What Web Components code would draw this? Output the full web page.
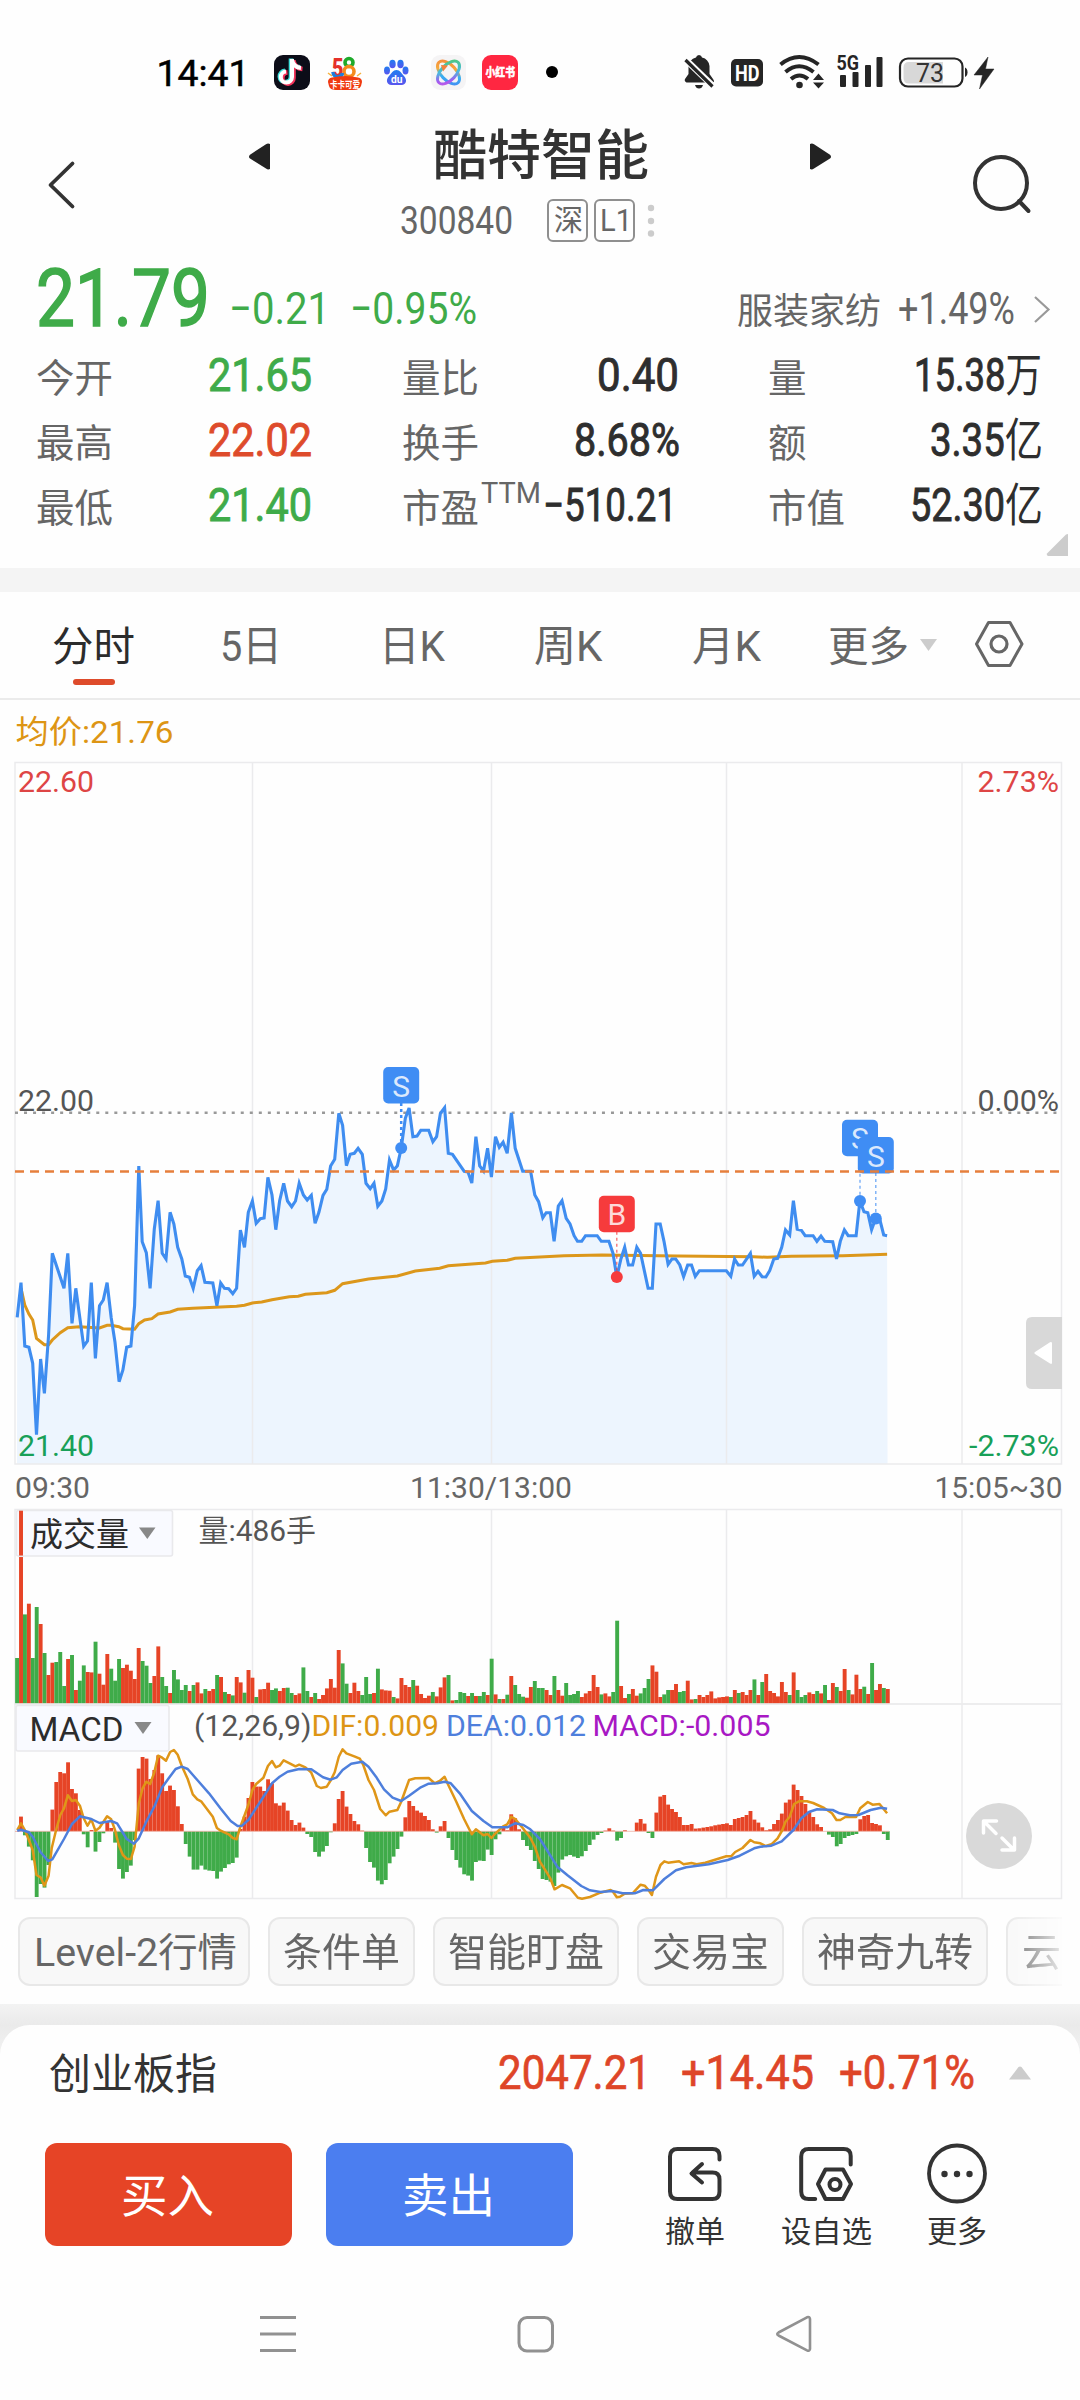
<!DOCTYPE html>
<html lang="zh-CN">
<head>
<meta charset="utf-8">
<title>酷特智能 300840</title>
<style>
html,body{margin:0;padding:0;background:#fefefe}
body{width:1080px;height:2400px;overflow:hidden;font-family:Roboto,"Noto Sans CJK SC",sans-serif;color:#333}
</style>
</head>
<body>
<stock-app></stock-app>
<script>
const FONT = 'Roboto,"Noto Sans CJK SC",sans-serif';

/* Text scaled horizontally to an exact width on a given baseline. */
class FitText extends HTMLElement {
  connectedCallback() {
    const a = n => this.getAttribute(n);
    const w = a('w'), h = a('h'), b = a('b'), s = a('s');
    const sk = a('sk') ? `stroke:currentColor;stroke-width:${a('sk')}px;` : '';
    const text = a('text').replace(/[万亿]/g, m => `<tspan style="stroke:none">${m}</tspan>`);
    this.attachShadow({mode: 'open'}).innerHTML = `
      <style>:host{display:block;flex:none;width:${w}px;height:${h}px}svg{display:block;overflow:visible}
      text{font-family:${FONT};font-size:${s}px;font-weight:${a('wt') || 400};fill:currentColor;${sk}}</style>
      <svg width="${w}" height="${h}"><text x="0" y="${b}">${text}</text></svg>`;
    const t = this.shadowRoot.querySelector('text');
    const n = t.getComputedTextLength();
    if (n > 0) t.setAttribute('transform', `scale(${(w / n).toFixed(4)} 1)`);
  }
}

const T = (x, text, w, s, h, b, extra = '') => `<fit-text style="margin-left:${x}px" text="${text}" w="${w}" s="${s}" h="${h}" b="${b}" ${extra}></fit-text>`;

/* A row of fit-texts given by absolute start and end; margins are worked out in flow order. */
function flowRow(h, items) {
  let cur = 0;
  return items.map(i => {
    const m = i.x - cur; cur = i.x + i.w;
    if (i.html) return `<div style="flex:none;margin-left:${m}px;width:${i.w}px;height:${h}px">${i.html}</div>`;
    return T(m, i.t, i.w, i.s, h, i.b, (i.wt ? `wt="${i.wt}" ` : '') + (i.sk ? `sk="${i.sk}" ` : '') + (i.c ? `class="${i.c}"` : ''));
  }).join('');
}
const svg = (w, h, vb, body) => `<svg width="${w}" height="${h}" viewBox="${vb}" style="display:block;overflow:visible">${body}</svg>`;

class StatusBar extends HTMLElement {
  connectedCallback() {
    const txt = (x, y, s, f, w, t, extra = '') => `<text x="${x}" y="${y}" font-size="${s}" fill="${f}" textLength="${w}" lengthAdjust="spacingAndGlyphs" ${extra}>${t}</text>`;
    this.attachShadow({mode: 'open'}).innerHTML = `
    <style>:host{display:flex;height:110px}svg{display:block;font-family:${FONT};flex:none}</style>
    ${svg(600, 110, '0 0 600 110', `
      <defs>
        <linearGradient id="bd" x1="0" y1="0" x2="0" y2="1"><stop offset="0" stop-color="#1f7df0"/><stop offset="1" stop-color="#5a55ee"/></linearGradient>
        <linearGradient id="rb" x1="0" y1="0" x2="1" y2="1"><stop offset="0" stop-color="#f7923a"/><stop offset=".35" stop-color="#58c97a"/><stop offset=".65" stop-color="#3f8df6"/><stop offset="1" stop-color="#b758e8"/></linearGradient>
        <linearGradient id="rc" gradientUnits="userSpaceOnUse" x1="438" y1="60" x2="460" y2="85"><stop offset="0" stop-color="#f5813c"/><stop offset=".4" stop-color="#f4a93c"/><stop offset=".6" stop-color="#38b0f0"/><stop offset="1" stop-color="#4a7df5"/></linearGradient>
        <linearGradient id="rd" gradientUnits="userSpaceOnUse" x1="460" y1="60" x2="438" y2="85"><stop offset="0" stop-color="#4fce5a"/><stop offset=".5" stop-color="#49b9e0"/><stop offset=".75" stop-color="#a05cf0"/><stop offset="1" stop-color="#d95ae0"/></linearGradient>
      </defs>
      ${txt(156.500, 86, 37.5, '#000', 93, '14:41', 'stroke="#000" stroke-width=".5"')}
      <rect x="274" y="55" width="36" height="35" rx="9" fill="#0c0d18"/>
      <g fill="none" stroke-width="4.6"><path d="M292 59v18a5.6 5.6 0 1 1-6-5.6M292 60c1 5 4 7.500 9 8" stroke="#3fe0dc" transform="translate(-1 -.6)"/><path d="M292 59v18a5.600 5.600 0 1 1-6-5.600M292 60c1 5 4 7.500 9 8" stroke="#f3335b" transform="translate(1.500 1)"/><path d="M292 59v18a5.600 5.600 0 1 1-6-5.600M292 60c1 5 4 7.500 9 8" stroke="#fff" stroke-width="4"/></g>
      ${txt(332, 77, 26, '#e5302a', 11.500, '5', 'font-weight="900"')}
      <g fill="none" stroke-width="3.600"><circle cx="349" cy="62.500" r="4" stroke="#1eaa2b"/><circle cx="349" cy="71.500" r="5" stroke="#f58a1c"/></g><path d="M333 72c0 6 9 6 9.500 1" fill="none" stroke="#1f7ddb" stroke-width="3.500"/>
      <path d="M328 73l4 3M361 73l-4 3" stroke="#f6b13c" stroke-width="1.500"/>
      <path d="M328 82q0-4 4-4.500q13-3 26 0q4 .5 4 4.500l-1 4q-2 4-7 4h-18q-6 0-7-4z" fill="#f03a10"/>
      ${txt(330, 88, 9.500, '#fff', 30, '卡卡可爱', 'font-weight="700"')}
      <g fill="url(#bd)"><ellipse cx="387" cy="70.500" rx="3" ry="4"/><ellipse cx="392.500" cy="64" rx="3.200" ry="4.300"/><ellipse cx="400.500" cy="64" rx="3.200" ry="4.300"/><ellipse cx="405.500" cy="70.500" rx="3" ry="4"/><path d="M396.500 70c3.500 0 5 3.500 7.500 6c3.500 3.500 2.500 9-2.500 9h-10c-5 0-6-5.500-2.500-9c2.500-2.500 4-6 7.500-6z"/></g>
      ${txt(391, 83, 11, '#fff', 11.500, 'du', 'font-weight="700"')}
      <rect x="431" y="55" width="35" height="35" rx="9" fill="#f5f4f5"/>
      <g fill="none" stroke-width="3"><ellipse cx="448.500" cy="72.500" rx="14" ry="7.500" transform="rotate(47 448.500 72.500)" stroke="url(#rc)"/><ellipse cx="448.500" cy="72.500" rx="14" ry="7.500" transform="rotate(-47 448.500 72.500)" stroke="url(#rd)"/></g>
      <path d="M441 65l7 .500l-5 6z" fill="#f5803c"/>
      <rect x="482" y="55" width="36" height="35" rx="9" fill="#ff2741"/>
      ${txt(485.500, 77, 12, '#fff', 29.500, '小红书', 'font-weight="900" stroke="#fff" stroke-width=".4"')}
      <circle cx="552" cy="72" r="6" fill="#000"/>`)}
    ${svg(480, 110, '600 0 480 110', `
      <g fill="#252525">
        <path d="M686.500 82.500h26.500q2-1 0-3.500l-3.500-5v-8q-1-7-7.500-8.500q-.5-2.500-3-2.500t-3 2.500q-7 2-7.500 8.500v8l-3.500 5q-1 2 1.500 3.500z"/><path d="M695 85h8q-1 3.500-4 3.500t-4-3.500z"/>
        <path d="M685 59l29 28" stroke="#fefefe" stroke-width="6.500"/><path d="M685.500 60l27 26.500" stroke="#252525" stroke-width="3.200"/>
        <rect x="731" y="59" width="32" height="27.500" rx="5"/>
        ${txt(735, 80.500, 22, '#fff', 24.500, 'HD', 'font-weight="700"')}
        <g fill="none" stroke="#252525" stroke-width="4"><path d="M780.500 64.500q18.500-15 38 0"/><path d="M785.500 72q13.500-11.500 28 0"/><path d="M791 79q8.500-7 17 0"/></g>
        <circle cx="799.500" cy="85" r="3.300"/><path d="M818.500 73.500l5.500 6.500h-11zM818.500 88.500l5.500-6h-11z"/>
        ${txt(836.500, 70, 19.500, '#252525', 22.500, '5G', 'font-weight="700"')}
        <rect x="840" y="75" width="6" height="12" rx="1"/><rect x="852.500" y="72" width="6" height="15" rx="1"/><rect x="865" y="65" width="6" height="22" rx="1"/><rect x="876.500" y="57" width="6" height="30" rx="1"/>
        <path d="M965 67.500q2.500 1 2.500 4.800t-2.500 4.700z"/>
        <path d="M988 57L974 75h8.500l-3 14L994 69h-8.500z" stroke="#252525" stroke-width=".5"/>
      </g>
      <rect x="900" y="58.500" width="62.500" height="28" rx="8" fill="none" stroke="#252525" stroke-width="2.200"/>
      <path d="M909 62h34v21.500h-34q-5.500 0-5.500-5.500v-10.500q0-5.500 5.500-5.500z" fill="#d8d8d8"/>
      ${txt(916, 81.500, 25, '#333', 28, '73')}`)}`;
  }
}
class StockHeader extends HTMLElement {
  connectedCallback() {
    this.attachShadow({mode: 'open'}).innerHTML = `
    <style>:host{display:flex;height:146px;align-items:flex-start}
    .mid{width:290px;margin-left:110px}.r{display:flex}.code{margin-top:13px;height:44px;color:#666}
    .badge{box-sizing:border-box;border:2px solid #8f8f8f;border-radius:6px;width:41px;height:43px}</style>
    ${svg(92, 146, '0 110 92 146', '<path d="M72.500 163.500L50.500 185L72.500 206.500" fill="none" stroke="#333" stroke-width="3.800" stroke-linecap="round" stroke-linejoin="round"/>')}
    ${svg(190, 146, '92 110 190 146', '<path d="M270 144v25q-2 1-4-.5l-16-10q-2-1.800 0-3.800l16-10.500q2-1.500 4-.2z" fill="#222"/>')}
    <div class="mid">
      <div class="r">${flowRow(76, [{x: 41, w: 216, s: 54, b: 65, t: '酷特智能', wt: 500}])}</div>
      <div class="r code">${T(8, '300840', 113, 38.500, 44, 35)}
        <div class="badge" style="margin-left:34px">${T(4.500, '深', 29, 29, 39, 30)}</div>
        <div class="badge" style="margin-left:6px">${T(3.500, 'L1', 32, 31, 39, 30)}</div>
        ${svg(20, 44, '635 199 20 44', '<g fill="#ccc"><circle cx="651" cy="208" r="3.200"/><circle cx="651" cy="221" r="3.200"/><circle cx="651" cy="233.500" r="3.200"/></g>')}
      </div></div>
    ${svg(398, 146, '682 110 398 146', '<path d="M810 144v25q2 1 4-.5l16-10q2-1.800 0-3.800l-16-10.500q-2-1.500-4-.2z" fill="#222"/><circle cx="1001" cy="183" r="26" fill="none" stroke="#333" stroke-width="4"/><path d="M1019 201l9.500 10" stroke="#333" stroke-width="4" stroke-linecap="round"/>')}`;
  }
}

class QuotePanel extends HTMLElement {
  connectedCallback() {
    const L = (x, w, t) => ({x, w, t, s: 38.500, b: 46, c: 'l'});
    const V = (x, w, t, c = '') => ({x, w, t, s: 46, b: 45.500, c, sk: .9});
    this.attachShadow({mode: 'open'}).innerHTML = `
    <style>:host{display:flex;flex-direction:column;height:312px;color:#2e2e2e}
    .r{display:flex;flex:none;height:65px}.top{height:90px}.g{color:#3fab49}.d{color:#de4b2b}.l{color:#666}
    .corner{align-self:flex-end;margin:-7px 11px 0 0}</style>
    <div class="r top">${flowRow(90, [
      {x: 36, w: 174, t: '21.79', s: 80.500, b: 70, c: 'g', sk: 1.600},
      {x: 229, w: 101, t: '−0.21', s: 45, b: 68, c: 'g'}, {x: 350, w: 127, t: '−0.95%', s: 45, b: 68, c: 'g'},
      {x: 737, w: 144, t: '服装家纺', s: 36, b: 68, c: 'l'}, {x: 898, w: 117, t: '+1.49%', s: 43.500, b: 68, c: 'l'},
      {x: 1032, w: 20, html: svg(20, 90, '1032 256 20 90', '<path d="M1035 297l13.500 12.500L1035 322" fill="none" stroke="#999" stroke-width="2.200"/>')}])}</div>
    <div class="r">${flowRow(65, [L(36, 77, '今开'), V(208, 104, '21.65', 'g'), L(402, 77, '量比'), V(597, 82, '0.40'), L(768, 38.500, '量'), V(914, 128, '15.38万')])}</div>
    <div class="r">${flowRow(65, [L(36, 77, '最高'), V(208, 104, '22.02', 'd'), L(402, 77, '换手'), V(574, 106, '8.68%'), L(768, 38.500, '额'), V(930, 113, '3.35亿')])}</div>
    <div class="r">${flowRow(65, [L(36, 77, '最低'), V(208, 104, '21.40', 'g'), L(402, 77, '市盈'), {x: 480.500, w: 60, t: 'TTM', s: 29.500, b: 27, c: 'l'}, V(543, 134, '−510.21'), L(768, 77, '市值'), V(910, 133, '52.30亿')])}</div>
    <div class="corner">${svg(23, 22, '0 0 23 22', '<path d="M22 0v22H2q-2-1-1-2.500L20 .5z" fill="#ccc"/>')}</div>`;
  }
}

class ChartTabs extends HTMLElement {
  connectedCallback() {
    const t = (x, w, t, c = '') => ({x, w, t, c, s: 40.500, b: 69});
    this.attachShadow({mode: 'open'}).innerHTML = `
    <style>:host{display:flex;flex-direction:column;box-sizing:border-box;height:132px;border-top:24px solid #f4f4f4;border-bottom:2px solid #ebebeb;color:#666}
    .r{display:flex}.on{color:#2c2c2c}.bar{width:42px;height:6px;border-radius:3px;background:#de4b2b;margin:-1px 0 0 73px}</style>
    <div class="r">${flowRow(88, [t(52, 83, '分时', 'on'), {...t(220, 62, '5日'), s: 42}, {...t(379, 66, '日K'), s: 42}, {...t(534, 68.500, '周K'), s: 42}, {...t(692, 69, '月K'), s: 42}, t(828, 81, '更多'),
      {x: 920, w: 18, html: svg(18, 88, '920 592 18 88', '<path d="M920 639h17l-8.500 12z" fill="#ccc"/>')},
      {x: 974, w: 50, html: svg(50, 88, '974 592 50 88', '<path d="M988.500 622.500h21.500l12 21.500l-12 21.500h-21.500l-12-21.500z" fill="none" stroke="#666" stroke-width="3" stroke-linejoin="round"/><circle cx="999" cy="644" r="8" fill="none" stroke="#666" stroke-width="3.200"/>')}])}</div>
    <div class="bar"></div>`;
  }
}

/* Series points are kept in the chart's half-panel units: 2.904 per px across, 3 per px down. */
const KX = 2.904;
const pts = (s, dx, dy) => s.trim().split(/\s+/).map(p => { const [x, y] = p.split(',').map(Number); return (dx + x / KX).toFixed(1) + ',' + (dy + y / 3).toFixed(1); }).join(' ');

const PRICE_A = `50,832 61,728 72,918 84,922 95,970 106,1184 118,957 129,1060 141,885 152,640 186,745 197,640 209,850 220,745 243,919 254,903 265,728 277,955 289,797 300,780 311,728 323,833 334,907 346,1025 357,990 368,922 380,918 391,797 403,378 413,605 425,638 436,745 448,567 459,482 471,640 482,657 494,517 505,552 516,622 528,657 538,708 550,712 561,745 573,692 584,677 595,727 618,729 630,797 641,729 652,745 664,746 676,761 687,745 698,570 710,622 721,517 733,483 744,550 756,536 767,534 778,412 790,465 801,569 812,483 824,430 835,483 847,500 858,483 869,430 881,465 892,480 904,466 915,550 926,517 938,466 949,448 960,378 972,358 984,220 995,256 1006,377 1017,343 1029,340 1040,325 1052,343 1063,430 1075,446 1086,430 1097,499 1109,483 1120,447 1131,360 1143,390 1154,377 1165,325 1177,235 1188,204 1199,290 1211,288 1222,271 1245,271 1257,305 1268,290 1279,220 1291,203 1302,340 1314,343 1348,394 1359,396 1370,429 1382,290 1393,378 1404,393 1416,325 1427,411 1439,290 1450,322 1461,307 1473,340 1485,219 1496,325 1518,394 1541,394 1553,465 1564,485`;
const PRICE_B = `8,533 18,518 30,518 41,604 53,498 64,482 76,535 87,552 99,587 109,604 121,604 132,587 166,587 178,604 200,604 212,640 223,711 235,657 246,622 257,675 269,675 281,622 292,640 314,745 326,745 337,552 349,552 360,604 372,673 383,657 394,657 406,675 417,710 429,675 440,675 451,709 463,692 541,692 554,709 565,657 576,675 588,675 611,640 622,709 633,694 645,710 656,711 667,692 679,657 690,655 702,622 713,570 725,585 736,482 747,568 759,571 770,587 793,587 804,604 816,588 827,604 850,605 861,657 872,604 884,570 895,587 918,587 929,482 941,515 952,518 963,569 975,535 986,535 998,585 1008,587`;
const AVG_A = `61,745 72,795 84,822 95,840 106,895 129,914 141,914 152,900 175,878 197,863 230,860 289,864 311,856 323,856 345,860 357,866 391,868 403,851 420,840 441,836 459,822 494,816 516,808 560,805 640,801 687,799 710,796 733,789 760,786 790,779 840,770 866,769 887,763 949,758 972,751 995,731 1070,717 1154,708 1206,693 1277,685 1302,677 1410,669 1430,664 1473,661 1496,655 1568,651`;
const AVG_B = `70,647 180,645 400,648 620,650 660,652 730,649 880,647 1008,643`;
const DIF_A = `50,1110 61,1090 72,1110 84,1140 95,1170 106,1245 118,1252 129,1277 141,1247 150,1165 163,1110 175,1065 186,1045 197,1006 209,1023 220,1020 232,1037 243,1075 254,1097 265,1078 277,1112 289,1103 311,1069 323,1078 334,1110 345,1155 357,1185 368,1196 380,1197 391,1160 403,1030 414,985 425,965 436,972 448,937 459,887 471,893 482,902 494,876 505,870 516,884 528,918 545,957 560,1003 573,1018 584,1024 618,1070 630,1104 641,1112 664,1123 676,1134 687,1138 698,1100 721,1035 733,990 744,972 765,953 778,918 790,903 801,922 812,917 824,901 858,919 869,914 887,922 904,938 920,978 932,984 949,980 961,960 972,937 984,890 995,868 1006,880 1029,889 1045,896 1055,915 1070,960 1086,990 1104,1047 1120,1066 1131,1055 1154,1050 1165,1025 1188,960 1206,955 1245,954 1262,970 1277,963 1291,950 1302,975 1325,1025 1348,1078 1370,1123 1382,1108 1404,1126 1416,1122 1427,1134 1439,1120 1461,1099 1473,1093 1485,1070 1496,1077 1518,1104 1540,1133 1553,1160 1568,1205`;
const DIF_B = `18,1115 30,1135 42,1168 64,1155 87,1165 110,1193 122,1196 145,1191 175,1178 205,1170 212,1175 223,1192 232,1190 246,1181 269,1180 292,1154 304,1157 315,1170 325,1185 337,1130 350,1095 361,1084 372,1088 404,1084 417,1093 440,1089 455,1093 480,1088 541,1069 555,1069 567,1056 588,1044 611,1020 622,1027 640,1030 656,1038 672,1033 690,1015 704,990 713,965 725,950 738,912 752,904 775,904 793,909 825,924 848,940 861,960 872,960 887,951 918,951 930,925 952,906 966,914 986,912 1008,940`;
const DEA_A = `50,1112 61,1109 84,1117 95,1130 118,1177 140,1203 152,1198 186,1137 209,1092 232,1069 265,1077 289,1089 323,1083 340,1090 368,1137 389,1151 403,1135 425,1085 448,1040 471,982 490,955 510,927 528,920 545,927 573,960 607,1000 640,1045 670,1083 690,1098 703,1097 721,1080 756,1025 790,970 812,950 835,935 869,927 904,928 938,952 960,959 978,952 995,930 1020,911 1052,905 1070,920 1092,950 1115,988 1140,1013 1165,1023 1188,1007 1222,982 1245,971 1270,970 1291,965 1309,970 1335,1000 1370,1053 1404,1083 1430,1102 1473,1102 1496,1090 1520,1095 1540,1108 1568,1137`;
const DEA_B = `20,1050 50,1100 80,1126 120,1158 145,1171 175,1176 210,1173 240,1180 275,1180 300,1170 328,1171 361,1137 395,1111 425,1102 490,1093 545,1080 580,1067 622,1045 640,1040 672,1037 702,1024 736,990 759,955 781,936 805,928 850,930 870,940 900,946 925,945 960,930 990,923 1008,926`;
const VOL_A = 'g594 r152 g463 r431 g594 g441 r492 g579 r645 r608 g606 g576 g678 r597 g585 r690 g662 g616 r636 r637 g545 r641 r674 r582 g626 g662 g597 r624 r614 r632 r657 r564 g603 g617 g669 r648 r559 g651 g678 r699 g630 g658 g690 g675 r693 g675 r667 r700 g687 r693 r687 g645 r651 g696 r702 g706 r651 r667 g698 r630 r653 g711 r688 r687 r668 g690 g685 r693 r684 g683 g699 r705 r700 g622 g693 r711 g699 r717 r705 r685 r657 r683 r570 g610 g671 r699 r668 r693 g705 g651 g702 r699 g626 r688 r691 r692 g711 r715 r654 r675 r681 g660 r677 r702 r714 r707 g696 r709 r682 r652 g645 r721 g720 g696 g699 r708 g699 r708 g708 g696 r705 g596 r703 g717 r717 g704 r648 g675 g702 g710 r713 r681 g663 g684'.split(' ');
const VOL_B = 'g564 r570 r585 g528 r570 r587 g549 g585 g582 g573 r591 r580 r573 r525 r561 g583 r580 r589 g576 g362 r558 r594 g582 r567 r587 g580 g564 g537 r496 r515 r591 g583 g570 r570 r552 g576 g573 r542 r598 g597 r585 r591 r585 r574 r595 r592 r591 r589 g591 r570 g579 r576 r585 r570 g538 r585 g546 r522 r573 r579 r589 r546 r576 g585 r517 g570 g591 g585 r577 r582 g573 r580 g555 r600 r549 g561 r573 r507 g570 r583 r524 r567 g560 r582 g489 r570 r552 g564 r567'.split(' ');
const MACD_A = '1113 1070 1126 1160 1201 1311 1272 1283 1215 1049 966 936 940 907 987 1000 1050 1123 1162 1110 1175 1146 1120 1085 1104 1148 1227 1256 1236 1217 1140 926 891 896 957 930 886 940 993 977 990 1039 1092 1152 1190 1229 1229 1217 1229 1232 1233 1256 1235 1224 1213 1209 1193 1107 1070 1014 966 980 980 993 958 970 1030 1037 1028 1052 1080 1095 1088 1103 1122 1131 1176 1190 1175 1158 1117 1090 1017 993 1040 1062 1083 1093 1112 1164 1206 1223 1262 1273 1260 1210 1190 1167 1130 1072 1023 1038 1052 1058 1068 1080 1108 1118 1099 1083 1134 1170 1200 1223 1243 1247 1262 1206 1202 1203 1169 1185 1138 1123 1101 1111 1063 1075 1108 1140 1158 1170 1203 1227'.split(' ').map(Number);
const MACD_B = '1137 1140 1145 1158 1118 1079 1069 1065 1070 1074 1069 1053 1035 1019 1005 999 992 985 992 1022 1014 991 994 994 968 957 971 999 1014 938 890 885 914 927 936 951 975 975 972 986 985 983 981 979 976 974 972 970 975 957 954 951 945 933 959 968 982 991 988 972 960 941 908 899 854 870 888 912 935 951 973 981 994 1004 1011 1039 1032 1014 1008 1005 1002 958 948 945 969 972 976 1002 1020'.split(' ').map(Number);

const RED = '#e64426', GREEN = '#3fab49', GRID = '#ebebed';
const barX = i => 17.1 + 3.922 * i - 1.96;
const grid = (y0, y1) => `<g fill="none" stroke="${GRID}" stroke-width="1.500"><rect x="15" y="${y0}" width="1046.500" height="${y1 - y0}"/>${[252.5, 491.5, 726.5, 962].map(x => `<path d="M${x} ${y0}V${y1}"/>`).join('')}</g>`;
const label = (x, y, w, s, f, t) => `<text x="${x}" y="${y}" textLength="${w}" lengthAdjust="spacingAndGlyphs" font-size="${s}" fill="${f}">${t}</text>`;
const chartCss = `<style>:host{display:block}svg{font-family:${FONT}}</style>`;

class PriceChart extends HTMLElement {
  connectedCallback() {
    const line = pts(PRICE_A, 0, 1040) + ' ' + pts(PRICE_B, 540, 1040);
    const pin = (x, y, cx, cy, c, t, dash) => `<path d="M${cx} ${y + 36}V${cy}" stroke="${c}" stroke-width="${dash ? 2.5 : 1.3}" stroke-dasharray="3 3" opacity="${dash ? 1 : .75}"/><circle cx="${cx}" cy="${cy}" r="6" fill="${c}"/><rect x="${x}" y="${y}" width="36" height="36.500" rx="5" fill="${c}"/><text x="${x + 18}" y="${y + 29.5}" text-anchor="middle" font-size="30" fill="#fff" fill-opacity=".82">${t}</text>`;
    this.attachShadow({mode: 'open'}).innerHTML = chartCss + svg(1080, 809, '0 700 1080 809', `
      ${label(15.500, 742.500, 158, 32, '#dd9514', '均价:21.76')}
      <polygon points="17,1464 ${line} 887.500,1464" fill="#edf5fe"/>
      ${grid(762.500, 1464)}
      <path d="M15 1112.700H1062" stroke="#999" stroke-width="2.600" stroke-dasharray="3 6.030"/>
      <polyline points="${pts(AVG_A, 0, 1040)} ${pts(AVG_B, 540, 1040)}" fill="none" stroke="#dc971b" stroke-width="3"/>
      <polyline points="${line}" fill="none" stroke="#3f8df0" stroke-width="3.100"/>
      ${pin(383.200, 1067, 401.200, 1148, '#3f8df4', 'S', true)}
      ${pin(598.800, 1195.800, 616.800, 1277, '#f63b3c', 'B')}
      ${pin(842, 1119.700, 860, 1201, '#3f8df4', 'S')}
      ${pin(857.800, 1137, 875.800, 1218.500, '#3f8df4', 'S')}
      <path d="M15 1171.500H1060" stroke="#e67f3c" stroke-width="2.600" stroke-dasharray="9 6"/>
      ${label(18, 791.500, 76, 30, '#de4545', '22.60')}${label(977.500, 791.500, 81.500, 30, '#de4545', '2.73%')}
      ${label(18, 1111, 76, 30, '#555', '22.00')}${label(977.500, 1111, 81.500, 30, '#555', '0.00%')}
      ${label(18, 1455.500, 76, 30, '#18a058', '21.40')}${label(969, 1455.500, 90, 30, '#18a058', '-2.73%')}
      ${label(15, 1497.500, 75, 30, '#666', '09:30')}${label(410, 1498, 162, 30, '#666', '11:30/13:00')}${label(934.500, 1498, 128, 30, '#666', '15:05~30')}
      <path d="M1062 1317h-30q-6 0-6 6v60q0 6 6 6h30z" fill="#d8d8d8"/><path d="M1052 1342.500v21q-1 .7-2 0l-15-9.500q-1.500-1 0-2l15-9.800q1-.5 2 .3z" fill="#fff"/>`);
  }
}

class VolumeChart extends HTMLElement {
  connectedCallback() {
    const bar = (v, i, base) => { const h = (base - v.slice(1)) / 3; return `<rect x="${barX(i).toFixed(2)}" y="${(1703.7 - h).toFixed(1)}" width="3.920" height="${h.toFixed(1)}" fill="${v[0] === 'r' ? RED : GREEN}"/>`; };
    this.attachShadow({mode: 'open'}).innerHTML = chartCss + svg(1080, 195, '0 1509 1080 195', `
      ${grid(1509.500, 1704)}
      <rect x="16.500" y="1510.500" width="156" height="45.500" rx="2" fill="#f9faff" stroke="#e9e9ec" stroke-width="1.600"/>
      ${VOL_A.map((v, i) => bar(v, i, 731)).join('')}${VOL_B.map((v, i) => bar(v, i + 134, 611)).join('')}
      <path d="M18 1556.300H24" stroke="#e9e9ec" stroke-width="1.500"/>
      ${label(30, 1545.500, 99, 33, '#2c2c2c', '成交量')}<path d="M139 1527.500h16.500l-8.200 11.500z" fill="#888"/>
      ${label(198.500, 1541, 117.500, 29.500, '#555', '量:486手')}`);
  }
}

class MacdChart extends HTMLElement {
  connectedCallback() {
    const bar = (v, i, zero) => { const d = (zero - v) / 3; return `<rect x="${barX(i).toFixed(2)}" y="${(d > 0 ? 1831.3 - d : 1831.3).toFixed(1)}" width="3.850" height="${Math.abs(d).toFixed(1)}" fill="${d > 0 ? RED : GREEN}"/>`; };
    this.attachShadow({mode: 'open'}).innerHTML = chartCss + svg(1080, 195, '0 1704 1080 195', `
      ${grid(1704, 1898.500)}
      ${MACD_A.map((v, i) => bar(v, i, 1114)).join('')}${MACD_B.map((v, i) => bar(v, i + 134, 994)).join('')}
      <path d="M15 1831.300H889" stroke="#eeb0a4" stroke-width=".8"/>
      <polyline points="${pts(DIF_A, 0, 1460)} ${pts(DIF_B, 540, 1500)}" fill="none" stroke="#df9618" stroke-width="2.500" stroke-linejoin="round"/>
      <polyline points="${pts(DEA_A, 0, 1460)} ${pts(DEA_B, 540, 1500)}" fill="none" stroke="#4e7fdc" stroke-width="2.500" stroke-linejoin="round"/>
      <rect x="16" y="1705.500" width="153" height="45.500" rx="2" fill="#f9faff" stroke="#e9e9ec" stroke-width="1.600"/>
      ${label(29.500, 1741, 94, 33, '#2c2c2c', 'MACD')}<path d="M134.500 1722h17l-8.500 12z" fill="#888"/>
      ${label(194, 1735.500, 117.500, 30, '#555', '(12,26,9)')}${label(311.500, 1735.500, 127.500, 30, '#dd9514', 'DIF:0.009')}${label(446, 1735.500, 140, 30, '#4e7fdc', 'DEA:0.012')}${label(592.500, 1735.500, 178, 30, '#a818c4', 'MACD:-0.005')}
      <circle cx="999" cy="1836" r="33" fill="#d9d9d9"/>
      <g fill="none" stroke="#fff" stroke-width="3.500" stroke-linecap="round" stroke-linejoin="round"><path d="M983.500 1833v-12h13M984 1821.500l12 12M1002 1850h12.500v-12M1014 1850l-12-12"/></g>`);
  }
}

class ChipTag extends HTMLElement {
  connectedCallback() {
    const w = +this.getAttribute('w'), tw = this.getAttribute('tw');
    this.attachShadow({mode: 'open'}).innerHTML = `<style>:host{display:block;box-sizing:border-box;flex:none;width:${w}px;height:69px;border:2px solid #e8e8e8;border-radius:12px;background:#f8f8f8;color:#666}</style>${T(this.getAttribute('pl'), this.getAttribute('text'), tw, 39, 65, 47.500)}`;
  }
}
class ToolChips extends HTMLElement {
  connectedCallback() {
    const c = (w, tw, t, pl = 13) => `<chip-tag w="${w}" tw="${tw}" text="${t}" pl="${pl}"></chip-tag>`;
    this.attachShadow({mode: 'open'}).innerHTML = `<style>:host{display:block;height:105px}
      .r{display:flex;gap:18px;width:1044px;overflow:hidden;padding-top:18px;margin-left:18px;-webkit-mask-image:linear-gradient(90deg,#000 0 985px,rgba(0,0,0,.15) 1044px)}</style>
      <div class="r">${c(232, 203, 'Level-2行情', 14)}${c(147, 117, '条件单')}${c(186, 156, '智能盯盘')}${c(147, 117, '交易宝')}${c(186, 156, '神奇九转')}${c(108, 39, '云', 13.500)}</div>`;
  }
}

class TradePanel extends HTMLElement {
  connectedCallback() {
    const n = (x, w, t) => ({x, w, t, s: 49, b: 64, c: 'd', sk: .7});
    const tool = (w, body, t, tw) => `<div class="tool" style="width:${w}px">${body}${T(0, t, tw, 30, 40, 32)}</div>`;
    this.attachShadow({mode: 'open'}).innerHTML = `
    <style>:host{display:block;background:linear-gradient(#f3f3f3,#eaeaea 21px,#f2f2f2 50px);padding-top:21px;color:#333}
    .sheet{background:#fefefe;border-radius:30px 30px 0 0;height:230px}.r{display:flex}.d{color:#de4528}
    .act{margin-top:30px;padding-left:45px;align-items:flex-start}
    .btn{display:flex;justify-content:center;width:247px;height:103px;border-radius:12px;color:#fff;margin-right:34px}
    .tool{display:flex;flex-direction:column;align-items:center}.tool fit-text{margin-top:5px}</style>
    <div class="sheet">
      <div class="r">${flowRow(88, [{x: 48.500, w: 168, t: '创业板指', s: 42, b: 64}, n(498, 153, '2047.21'), n(681, 133, '+14.45'), n(839, 136, '+0.71%'),
        {x: 1009, w: 22, html: svg(22, 88, '1009 2025 22 88', '<path d="M1009 2079.500h22l-9.500-12.500q-1.500-1-3 0z" fill="#ccc"/>')}])}</div>
      <div class="r act">
        <div class="btn" style="background:#e64426">${T(-2, '买入', 93, 46, 103, 69.500)}</div>
        <div class="btn" style="background:#4b7ef0">${T(-2, '卖出', 93, 46, 103, 69.500)}</div>
        <div style="flex:none;margin-left:42px">${tool(92, svg(58, 62, '666 2143 58 62', '<path d="M719.500 2159.500v-3.500q0-7-7-7h-35q-7.500 0-7.500 7.500v35q0 7.500 7.500 7.500h35q7 0 7-7.500v-12q0-7-7-7h-20M702 2164l-10.500 9.500l10.500 9" fill="none" stroke="#333" stroke-width="4" stroke-linecap="round" stroke-linejoin="round"/>'), '撤单', 60)}</div>
        <div style="flex:none;margin-left:35px">${tool(100, svg(58, 62, '797 2143 58 62', '<path d="M850.700 2164.500v-8.500q0-7-7-7h-35q-7.500 0-7.500 7.500v35q0 7.500 7.500 7.500h6.500M825.500 2169.500h17.500l8 14.500l-8 15h-17.500l-7.500-15z" fill="none" stroke="#333" stroke-width="4" stroke-linecap="round" stroke-linejoin="round"/><circle cx="835" cy="2184.500" r="5.500" fill="none" stroke="#333" stroke-width="4"/>'), '设自选', 91)}</div>
        <div style="flex:none;margin-left:34px">${tool(94, svg(60, 62, '928 2143 60 62', '<circle cx="958" cy="2173.500" r="28" fill="none" stroke="#333" stroke-width="3.800"/><g fill="#333"><circle cx="945.500" cy="2174" r="3.200"/><circle cx="958" cy="2174" r="3.200"/><circle cx="970.500" cy="2174" r="3.200"/></g>'), '更多', 60)}</div>
      </div>
    </div>`;
  }
}

class NavBar extends HTMLElement {
  connectedCallback() {
    this.attachShadow({mode: 'open'}).innerHTML = `<style>:host{display:flex;height:145px;background:#fefefe;align-items:flex-start;padding-top:58px;box-sizing:border-box}svg{flex:none}</style>
      <div style="padding-left:258px;display:flex;gap:218px">
      ${svg(40, 42, '0 0 40 42', '<path d="M2 4.500h36M2 21h36M2 37.500h36" stroke="#919191" stroke-width="3"/>')}
      ${svg(40, 42, '0 0 40 42', '<rect x="3" y="4.500" width="33.500" height="33.500" rx="8" fill="none" stroke="#919191" stroke-width="3"/>')}
      ${svg(40, 42, '0 0 40 42', '<path d="M36 6v30q-.5 2.500-3 1.300L4.500 22.500q-2.500-1.500 0-3L33 4.300q2.500-1 3 1.700z" fill="none" stroke="#919191" stroke-width="2.600" stroke-linejoin="round"/>')}</div>`;
  }
}

class StockApp extends HTMLElement {
  connectedCallback() {
    this.attachShadow({mode: 'open'}).innerHTML = `<style>:host{display:flex;flex-direction:column;width:1080px;height:2400px;overflow:hidden;background:#fefefe}:host>*{flex:none}</style>
      <status-bar></status-bar><stock-header></stock-header><quote-panel></quote-panel><chart-tabs></chart-tabs>
      <price-chart></price-chart><volume-chart></volume-chart><macd-chart></macd-chart>
      <tool-chips></tool-chips><trade-panel></trade-panel><nav-bar></nav-bar>`;
  }
}
for (const [n, c] of Object.entries({'fit-text': FitText, 'status-bar': StatusBar, 'stock-header': StockHeader, 'quote-panel': QuotePanel, 'chart-tabs': ChartTabs, 'price-chart': PriceChart, 'volume-chart': VolumeChart, 'macd-chart': MacdChart, 'chip-tag': ChipTag, 'tool-chips': ToolChips, 'trade-panel': TradePanel, 'nav-bar': NavBar, 'stock-app': StockApp})) customElements.define(n, c);
</script>
</body>
</html>
